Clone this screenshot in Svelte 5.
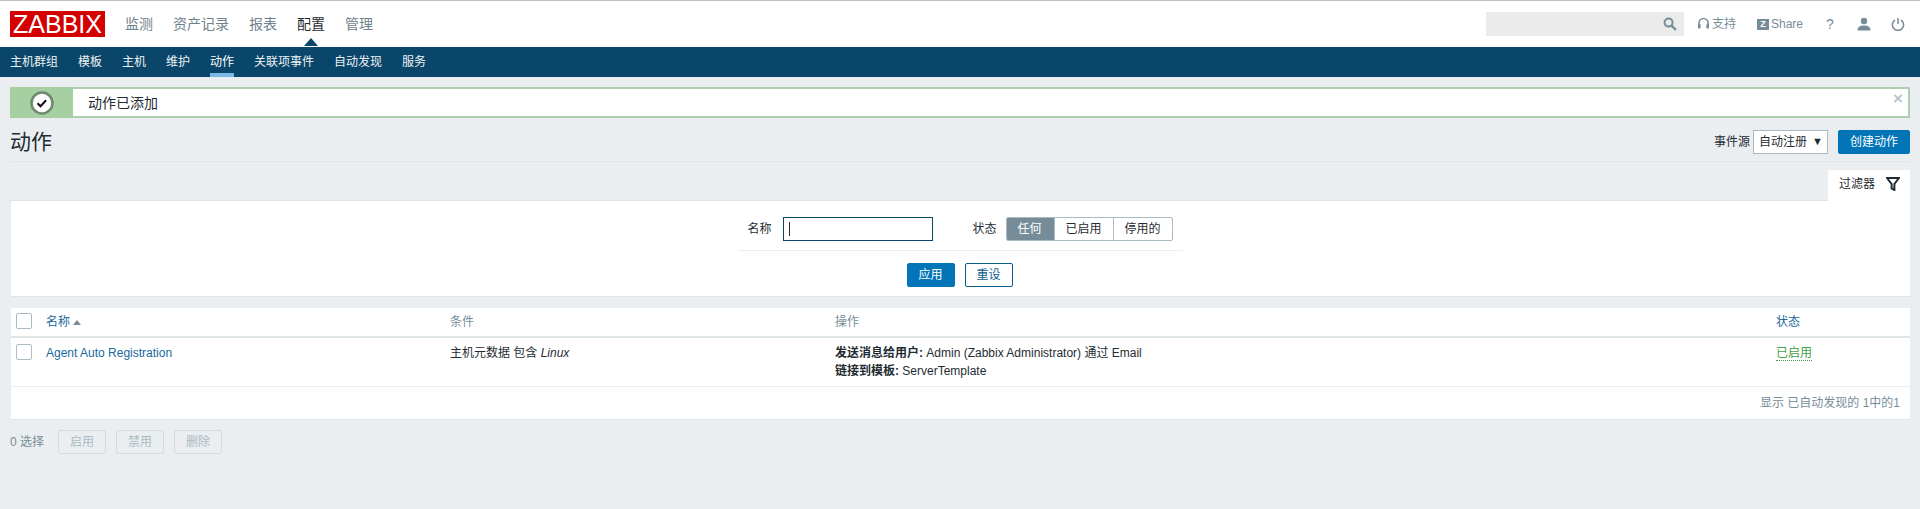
<script>
  const mainMenu = ['监测', '资产记录', '报表', '配置', '管理'];
  const subMenu = ['主机群组', '模板', '主机', '维护', '动作', '关联项事件', '自动发现', '服务'];
</script>

<div class="page">
  <header class="top">
    <div class="logo">ZABBIX</div>
    <nav class="main">
      {#each mainMenu as m}
        <span class:sel={m === '配置'}>{m}</span>
      {/each}
    </nav>
    <div class="tools">
      <div class="search">
        <svg width="14" height="14" viewBox="0 0 14 14"><circle cx="5.600" cy="5.600" r="4" fill="none" stroke="#768d99" stroke-width="2"/><path d="M8.600 8.600L13 13" stroke="#768d99" stroke-width="2.400"/></svg>
      </div>
      <span class="tool t1">
        <svg width="13" height="14" viewBox="0 0 13 14"><path d="M2 9V6a4.500 4.500 0 0 1 9 0v3" fill="none" stroke="#768d99" stroke-width="1.600"/><rect x="1" y="7" width="2.600" height="4.600" rx="1" fill="#768d99"/><rect x="9.400" y="7" width="2.600" height="4.600" rx="1" fill="#768d99"/></svg>
        支持
      </span>
      <span class="tool t2"><i class="zbox">Z</i>Share</span>
      <span class="tool t3">?</span>
      <svg class="t4" width="14" height="14" viewBox="0 0 14 14"><circle cx="7" cy="4" r="3.200" fill="#768d99"/><path d="M0.500 13.500c0-4 3-5 6.500-5s6.500 1 6.500 5z" fill="#768d99"/></svg>
      <svg class="t5" width="14" height="14" viewBox="0 0 14 14"><path d="M4 3a5.600 5.600 0 1 0 6 0" fill="none" stroke="#768d99" stroke-width="1.500"/><path d="M7 1v6" stroke="#768d99" stroke-width="1.500"/></svg>
    </div>
  </header>

  <nav class="sub">
    {#each subMenu as m}
      <span class:sel={m === '动作'}>{m}</span>
    {/each}
  </nav>

  <main class="content">
    <div class="msg">
      <div class="msg-icon">
        <svg width="26" height="26" viewBox="0 0 26 26"><circle cx="13" cy="13" r="10.500" fill="#fff" stroke="#6f8a72" stroke-width="2.600"/><path d="M8.500 13.200l3 3 5.600-6" fill="none" stroke="#111" stroke-width="2"/></svg>
      </div>
      <div class="msg-text">动作已添加</div>
      <span class="msg-close">×</span>
    </div>

    <div class="title-row">
      <h1>动作</h1>
      <div class="controls">
        <span class="src">事件源</span>
        <div class="select">自动注册<span class="caret">▼</span></div>
        <button class="btn create">创建动作</button>
      </div>
    </div>

    <div class="filter-tabs">
      <div class="ftab">
        过滤器
        <svg width="14" height="14" viewBox="0 0 14 14"><path d="M1 1h12L8.400 7v6L5.600 11.500V7z" fill="none" stroke="#1f2c33" stroke-width="2"/></svg>
      </div>
    </div>
    <section class="filter">
      <div class="frow">
        <label class="fname">名称</label>
        <div class="finput"><i></i></div>
        <label class="fstate">状态</label>
        <div class="seg">
          <span class="on">任何</span><span>已启用</span><span>停用的</span>
        </div>
      </div>
      <div class="fbtns">
        <button class="btn apply">应用</button>
        <button class="btn reset">重设</button>
      </div>
    </section>

    <section class="table">
      <div class="row head">
        <div class="c0"><span class="cb"></span></div>
        <div class="c1 link">名称 <span class="arrow"></span></div>
        <div class="c2">条件</div>
        <div class="c3">操作</div>
        <div class="c4 link">状态</div>
      </div>
      <div class="row body">
        <div class="c0"><span class="cb"></span></div>
        <div class="c1 link">Agent Auto Registration</div>
        <div class="c2">主机元数据 包含 <em>Linux</em></div>
        <div class="c3"><b>发送消息给用户:</b> Admin (Zabbix Administrator) 通过 Email<br /><b>链接到模板:</b> ServerTemplate</div>
        <div class="c4"><span class="enabled">已启用</span></div>
      </div>
      <div class="foot">显示 已自动发现的 1中的1</div>
    </section>

    <div class="actions">
      <span class="count">0 选择</span>
      <button class="dis">启用</button>
      <button class="dis">禁用</button>
      <button class="dis">删除</button>
    </div>
  </main>
</div>

<style>
  :global(body) {
    margin: 0;
    background: #ebeef0;
  }
  .page {
    height: 509px;
    overflow: hidden;
    font: 12px/14px Arial, "Liberation Sans", "Noto Sans CJK SC", sans-serif;
    color: #1f2c33;
  }
  .top {
    height: 46px;
    background: #fff;
    border-top: 1px solid #c0c0c0;
    display: flex;
    align-items: center;
    position: relative;
  }
  .logo {
    margin-left: 10px;
    width: 95px;
    height: 26px;
    background: #d40000;
    color: #fff;
    font-size: 25px;
    line-height: 26px;
    text-align: center;
  }
  .main {
    display: flex;
    gap: 20px;
    margin-left: 20px;
    font-size: 14px;
    color: #6f828c;
  }
  .main .sel {
    color: #1f2c33;
    position: relative;
  }
  .main .sel::after {
    content: "";
    position: absolute;
    left: 50%;
    margin-left: -7px;
    bottom: -15px;
    border: 7px solid transparent;
    border-top: 0;
    border-bottom: 8px solid #0a466a;
  }
  .tools {
    margin-left: auto;
    display: flex;
    align-items: center;
    color: #768d99;
    padding-right: 15px;
  }
  .search {
    width: 198px;
    height: 24px;
    background: #ebebeb;
    display: flex;
    align-items: center;
    justify-content: flex-end;
    padding-right: 7px;
    box-sizing: border-box;
    margin-right: 13px;
  }
  .tool {
    display: inline-flex;
    align-items: center;
  }
  .t1 { gap: 2px; width: 60px; }
  .t2 { width: 64px; }
  .zbox {
    width: 12px;
    height: 11px;
    background: #768d99;
    color: #fff;
    font: bold 9px/11px Arial, "Liberation Sans", sans-serif;
    text-align: center;
    margin-right: 2px;
  }
  .t3 { font-size: 14px; width: 29px; padding-left: 5px; box-sizing: border-box; }
  .t4 { margin-right: 20px; margin-left: 7px; }
  .sub {
    height: 30px;
    background: #0a466a;
    display: flex;
    gap: 20px;
    padding-left: 10px;
    color: #fff;
  }
  .sub span {
    line-height: 30px;
    height: 26px;
    opacity: 0.93;
  }
  .sub .sel {
    height: 30px;
    box-sizing: border-box;
    border-bottom: 4px solid #7ab8e8;
    opacity: 1;
  }
  .content {
    padding: 10px 10px 0;
  }
  .msg {
    height: 31px;
    box-sizing: border-box;
    border: 2px solid #afd0ae;
    border-left: 0;
    background: #fff;
    display: flex;
    align-items: center;
    position: relative;
  }
  .msg-icon {
    width: 63px;
    height: 31px;
    margin: -2px 15px -2px 0;
    background: #a7d0a2;
    display: flex;
    align-items: center;
    justify-content: center;
  }
  .msg-text {
    font-size: 14px;
    color: #1f2c33;
  }
  .msg-close {
    position: absolute;
    right: 5px;
    top: 3px;
    font-size: 17px;
    font-weight: bold;
    color: #b9c4ca;
  }
  .title-row {
    height: 44px;
    box-sizing: border-box;
    border-bottom: 1px solid #dfe4e7;
    display: flex;
    align-items: center;
    justify-content: space-between;
    padding-top: 4px;
  }
  h1 {
    margin: 0;
    font-size: 21px;
    line-height: 24px;
    font-weight: 400;
    color: #1f2c33;
  }
  .controls {
    display: flex;
    align-items: center;
  }
  .src { margin-right: 3px; }
  .select {
    width: 75px;
    height: 24px;
    box-sizing: border-box;
    background: #fff;
    border: 1px solid #acbbc3;
    line-height: 22px;
    padding-left: 5px;
    position: relative;
    margin-right: 10px;
  }
  .caret {
    position: absolute;
    right: 4px;
    top: -1px;
    font-size: 11px;
  }
  .btn {
    font: inherit;
    height: 24px;
    box-sizing: border-box;
    border-radius: 2px;
    padding: 0 11px;
    background: #0275b8;
    border: 1px solid #0275b8;
    color: #fff;
    cursor: pointer;
  }
  .create { width: 72px; padding: 0; }
  .filter-tabs {
    display: flex;
    justify-content: flex-end;
    margin-top: 8px;
    border-bottom: 1px solid #dfe4e7;
    height: 30px;
  }
  .ftab {
    width: 82px;
    height: 31px;
    background: #fff;
    box-sizing: border-box;
    padding-left: 11px;
    display: flex;
    align-items: center;
    gap: 11px;
    padding-bottom: 3px;
  }
  .filter {
    background: #fff;
    height: 96px;
    box-sizing: border-box;
    margin-left: 1px;
    border-bottom: 1px solid #dfe4e7;
    padding-top: 16px;
    display: flex;
    flex-direction: column;
    align-items: center;
  }
  .frow {
    width: 445px;
    box-sizing: border-box;
    height: 34px;
    border-bottom: 1px solid #ebeef0;
    display: flex;
    align-items: flex-start;
    padding-left: 10px;
    margin-left: -1px;
  }
  .frow label {
    line-height: 24px;
    color: #1f2c33;
  }
  .fname { margin-right: 11px; }
  .finput {
    width: 150px;
    height: 24px;
    box-sizing: border-box;
    border: 1px solid #0a466a;
    margin-right: 40px;
    padding: 4px 5px;
  }
  .finput i {
    display: block;
    width: 1px;
    height: 14px;
    background: #1f2c33;
  }
  .fstate { margin-right: 9px; }
  .seg {
    display: flex;
    height: 24px;
    box-sizing: border-box;
    border: 1px solid #acbbc3;
    border-radius: 2px;
    overflow: hidden;
  }
  .seg span {
    line-height: 22px;
    padding: 0 11px;
    border-left: 1px solid #acbbc3;
  }
  .seg span:first-child { border-left: 0; }
  .seg .on {
    background: #768d99;
    color: #fff;
    margin: -1px 0 -1px -1px;
    line-height: 24px;
    padding: 0 12px;
  }
  .fbtns {
    display: flex;
    gap: 10px;
    margin: 12px 2px 0 0;
  }
  .apply { width: 48px; padding: 0; }
  .reset {
    width: 48px;
    padding: 0;
    background: #fff;
    color: #0a5a8a;
    border-color: #0a5a8a;
  }
  .table {
    background: #fff;
    margin: 11px 0 0 1px;
    border-bottom: 1px solid #dfe4e7;
  }
  .row {
    display: grid;
    grid-template-columns: 35px 404px 385px 941px 1fr;
  }
  .head {
    height: 30px;
    box-sizing: border-box;
    border-bottom: 2px solid #dfe4e7;
    line-height: 29px;
    color: #768d99;
  }
  .body {
    height: 49px;
    box-sizing: border-box;
    border-bottom: 1px solid #ebeef0;
    padding-top: 6px;
    line-height: 18px;
    color: #1f2c33;
  }
  .c0 { padding-left: 5px; }
  .cb {
    display: block;
    width: 16px;
    height: 16px;
    box-sizing: border-box;
    border: 1px solid #acbbc3;
    border-radius: 2px;
    background: #fff;
  }
  .head .cb { margin-top: 5px; }
  .link { color: #1a6a9c; }
  .arrow {
    display: inline-block;
    border: 4px solid transparent;
    border-top: 0;
    border-bottom: 5px solid #768d99;
    vertical-align: 1px;
  }
  .enabled {
    color: #429e47;
    border-bottom: 1px dotted #429e47;
  }
  .foot {
    height: 32px;
    line-height: 32px;
    text-align: right;
    padding-right: 10px;
    color: #768d99;
  }
  .actions {
    display: flex;
    align-items: center;
    margin-top: 10px;
    gap: 10px;
  }
  .count {
    color: #768d99;
    margin-right: 4px;
  }
  .dis {
    font: inherit;
    width: 48px;
    height: 24px;
    background: #ebeef0;
    border: 1px solid #d4dade;
    border-radius: 2px;
    color: #acbbc3;
    padding: 0;
  }
</style>
